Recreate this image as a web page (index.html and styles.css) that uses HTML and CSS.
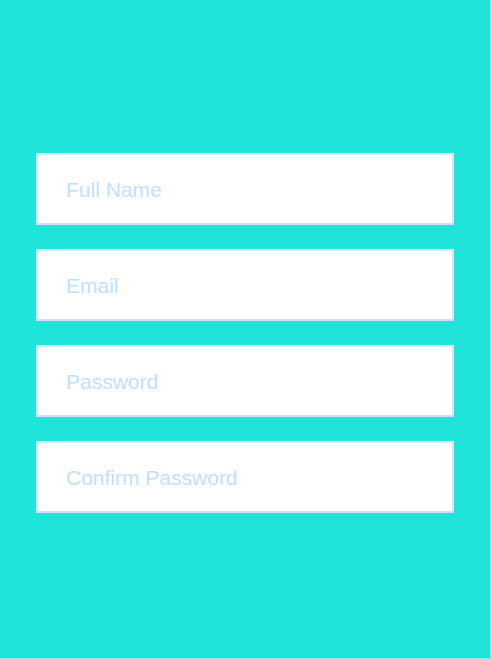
FILE: index.html
```html
<!DOCTYPE html>
<html lang="en">
<head>
<meta charset="utf-8">
<title>Sign up</title>
<link rel="stylesheet" href="styles.css">
</head>
<body>
<main class="page">
  <form class="form">
    <input class="field" type="text" placeholder="Full Name">
    <input class="field" type="email" placeholder="Email">
    <input class="field" type="password" placeholder="Password">
    <input class="field" type="password" placeholder="Confirm Password">
  </form>
</main>
</body>
</html>
```

FILE: styles.css
```css
html, body {
  margin: 0;
  padding: 0;
  height: 100%;
  background: #7feee8;
}
.page {
  box-sizing: border-box;
  width: calc(100% - 1px);
  height: calc(100% - 1px);
  background: #20e3da;
  padding: 153px 36px 0 36px;
  font-family: "Liberation Sans", Arial, sans-serif;
}
.form {
  display: flex;
  flex-direction: column;
  gap: 24px;
}
.field {
  box-sizing: border-box;
  width: 100%;
  height: 72px;
  margin: 0;
  padding: 2px 28px 0 28px;
  border: 2px solid #d3e6fb;
  border-bottom-color: #d6dcf8;
  background: #ffffff;
  font-family: "Liberation Sans", Arial, sans-serif;
  font-size: 21px;
  color: #333;
  outline: none;
  border-radius: 0;
}
.field::placeholder {
  color: #bfe0ff;
  opacity: 1;
}
```
